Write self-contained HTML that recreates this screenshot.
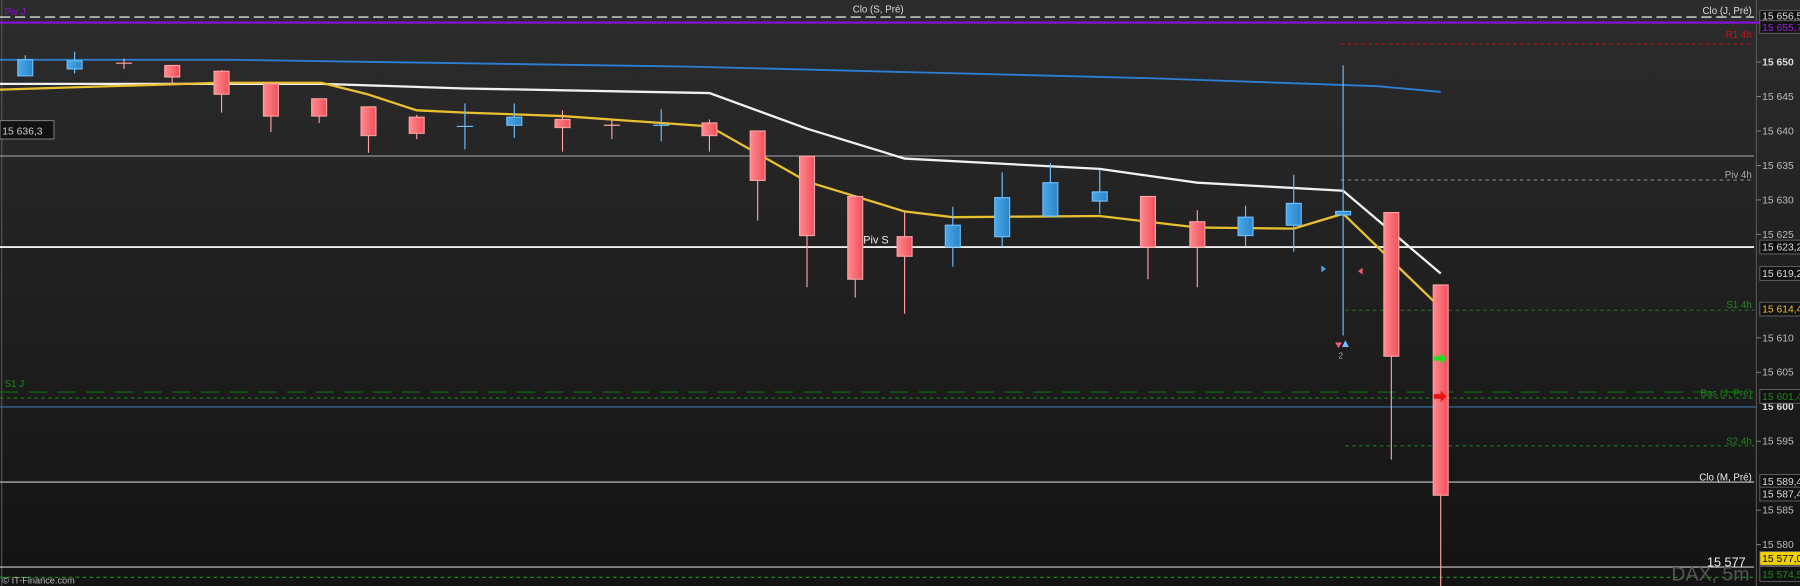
<!DOCTYPE html>
<html><head><meta charset="utf-8"><style>
html,body{margin:0;padding:0;background:#1c1c1c;overflow:hidden}
svg{display:block}
text{font-family:"Liberation Sans",sans-serif}
</style></head><body>
<svg width="1800" height="586" viewBox="0 0 1568 510" preserveAspectRatio="none" xmlns="http://www.w3.org/2000/svg">
<defs>
<linearGradient id="bg" x1="0" y1="0" x2="0" y2="1">
<stop offset="0" stop-color="#2c2c2c"/><stop offset="1" stop-color="#131313"/></linearGradient>
<linearGradient id="rd" x1="0" y1="0" x2="1" y2="0"><stop offset="0" stop-color="#ff8a8e"/><stop offset="1" stop-color="#f0505a"/></linearGradient>
<linearGradient id="bl" x1="0" y1="0" x2="1" y2="0"><stop offset="0" stop-color="#4aa8e8"/><stop offset="1" stop-color="#2c84c8"/></linearGradient>
</defs>
<rect width="1568" height="510" fill="url(#bg)"/>
<line x1="1.5" y1="0" x2="1.5" y2="510" stroke="#555" stroke-width="1"/>
<line x1="1530" y1="0" x2="1530" y2="510" stroke="#555" stroke-width="1"/>
<line x1="0" y1="14.8" x2="1528" y2="14.8" stroke="#ddd" stroke-width="1.2" stroke-dasharray="9,4"/>
<line x1="0" y1="19.7" x2="1568" y2="19.7" stroke="#8a10d0" stroke-width="2"/>
<line x1="1168" y1="38.3" x2="1528" y2="38.3" stroke="#d01010" stroke-width="0.9" stroke-dasharray="3,3"/>
<line x1="0" y1="135.8" x2="1528" y2="135.8" stroke="#aaa" stroke-width="0.9"/>
<line x1="1168" y1="156.7" x2="1528" y2="156.7" stroke="#888" stroke-width="0.9" stroke-dasharray="3,3"/>
<line x1="0" y1="215" x2="1528" y2="215" stroke="#eee" stroke-width="1.6"/>
<line x1="1172" y1="270" x2="1528" y2="270" stroke="#1d7a1d" stroke-width="0.9" stroke-dasharray="3,3"/>
<line x1="0" y1="341.2" x2="1528" y2="341.2" stroke="#127012" stroke-width="0.9" stroke-dasharray="16,9"/>
<line x1="0" y1="346.4" x2="1528" y2="346.4" stroke="#1d8a1d" stroke-width="0.9" stroke-dasharray="3,3"/>
<line x1="0" y1="354.2" x2="1530" y2="354.2" stroke="#3a74a8" stroke-width="1"/>
<line x1="1172" y1="388" x2="1528" y2="388" stroke="#1d7a1d" stroke-width="0.9" stroke-dasharray="3,3"/>
<line x1="0" y1="419.5" x2="1528" y2="419.5" stroke="#aaa" stroke-width="1.2"/>
<line x1="0" y1="493.5" x2="1528" y2="493.5" stroke="#ccc" stroke-width="1"/>
<line x1="0" y1="502.5" x2="1528" y2="502.5" stroke="#1d8a1d" stroke-width="1" stroke-dasharray="3,3"/>
<g font-size="8.5" text-anchor="end">
<text x="765" y="11" fill="#ddd" text-anchor="middle">Clo (S, Pré)</text>
<text x="1526" y="12" fill="#ddd">Clo (J, Pré)</text>
<text x="1526" y="33" fill="#d01010">R1 4h</text>
<text x="1526" y="155" fill="#aaa">Piv 4h</text>
<text x="1526" y="268" fill="#1d8a1d">S1 4h</text>
<text x="1526" y="345" fill="#1d8a1d">Bas (J, Pré)</text>
<text x="1526" y="387" fill="#1d8a1d">S2 4h</text>
<text x="1526" y="418" fill="#eee">Clo (M, Pré)</text>
<text x="4" y="13" fill="#8a10d0" text-anchor="start">Piv J</text>
<text x="4" y="337" fill="#1d8a1d" text-anchor="start">S1 J</text>
<text x="752" y="212" fill="#eee" text-anchor="start" font-size="9.5">Piv S</text>
</g>
<polyline fill="none" stroke="#2d7fd6" stroke-width="1.6" points="0,52 200,52 400,55 600,58 800,63 1000,68 1200,75 1255,80"/>
<polyline fill="none" stroke="#f0f0f0" stroke-width="2" points="0,73 280,73 405,77 618,81 703,112 788,138 958,147 1043,159 1170,166 1255,238"/>
<polyline fill="none" stroke="#e8c030" stroke-width="2" points="0,78 193,72 280,72 320,82 363,96 405,98 490,101 618,110 703,158 788,184 830,189 958,188 1043,198 1127,199 1170,186 1255,268"/>
<g stroke-width="1">
<g stroke="#6ec0ff" fill="url(#bl)">
<line x1="22" y1="48" x2="22" y2="66"/><rect x="15.5" y="52" width="13" height="14"/>
<line x1="65" y1="45" x2="65" y2="64"/><rect x="58.5" y="53" width="13" height="7"/>
<line x1="405" y1="90" x2="405" y2="130"/><line x1="398" y1="110" x2="412" y2="110"/>
<line x1="448" y1="90" x2="448" y2="120"/><rect x="441.5" y="102" width="13" height="7"/>
<line x1="576" y1="95" x2="576" y2="123"/><line x1="569" y1="109" x2="583" y2="109"/>
<line x1="830" y1="180" x2="830" y2="232"/><rect x="823.5" y="196" width="13" height="19"/>
<line x1="873" y1="150" x2="873" y2="215"/><rect x="866.5" y="172" width="13" height="34"/>
<line x1="915" y1="142" x2="915" y2="188"/><rect x="908.5" y="159" width="13" height="29"/>
<line x1="958" y1="148" x2="958" y2="186"/><rect x="951.5" y="167" width="13" height="8"/>
<line x1="1085" y1="179" x2="1085" y2="214"/><rect x="1078.5" y="189" width="13" height="16"/>
<line x1="1127" y1="152" x2="1127" y2="219"/><rect x="1120.5" y="177" width="13" height="19"/>
<line x1="1170" y1="57" x2="1170" y2="292"/><rect x="1163.5" y="184" width="13" height="3"/>
</g>
<g stroke="#ffa0a4" fill="url(#rd)">
<line x1="108" y1="51" x2="108" y2="60"/><line x1="101" y1="55" x2="115" y2="55"/>
<line x1="150" y1="57" x2="150" y2="73"/><rect x="143.5" y="57" width="13" height="10"/>
<line x1="193" y1="61" x2="193" y2="98"/><rect x="186.5" y="62" width="13" height="20"/>
<line x1="236" y1="73" x2="236" y2="115"/><rect x="229.5" y="73" width="13" height="28"/>
<line x1="278" y1="86" x2="278" y2="107"/><rect x="271.5" y="86" width="13" height="15"/>
<line x1="321" y1="93" x2="321" y2="133"/><rect x="314.5" y="93" width="13" height="25"/>
<line x1="363" y1="100" x2="363" y2="121"/><rect x="356.5" y="102" width="13" height="14"/>
<line x1="490" y1="96" x2="490" y2="132"/><rect x="483.5" y="104" width="13" height="7"/>
<line x1="533" y1="104" x2="533" y2="121"/><line x1="526" y1="109" x2="540" y2="109"/>
<line x1="618" y1="104" x2="618" y2="132"/><rect x="611.5" y="107" width="13" height="11"/>
<line x1="660" y1="114" x2="660" y2="192"/><rect x="653.5" y="114" width="13" height="43"/>
<line x1="703" y1="136" x2="703" y2="250"/><rect x="696.5" y="136" width="13" height="69"/>
<line x1="745" y1="171" x2="745" y2="259"/><rect x="738.5" y="171" width="13" height="72"/>
<line x1="788" y1="184" x2="788" y2="273"/><rect x="781.5" y="206" width="13" height="17"/>
<line x1="1000" y1="171" x2="1000" y2="243"/><rect x="993.5" y="171" width="13" height="44"/>
<line x1="1043" y1="183" x2="1043" y2="250"/><rect x="1036.5" y="193" width="13" height="22"/>
<line x1="1212" y1="185" x2="1212" y2="400"/><rect x="1205.5" y="185" width="13" height="125"/>
<line x1="1255" y1="248" x2="1255" y2="510"/><rect x="1248.5" y="248" width="13" height="183"/>
</g>
</g>
<polygon points="1151,231 1155,234 1151,237" fill="#4aa8e8"/>
<polygon points="1187,233 1183,236 1187,239" fill="#f06070"/>
<polygon points="1163,298 1169,298 1166,303" fill="#f06070"/>
<polygon points="1169,302 1175,302 1172,296" fill="#6ec0ff"/>
<text x="1166" y="312" font-size="7" fill="#aaa">2</text>
<polygon points="1249,310 1255,310 1255,307 1260,312 1255,317 1255,314 1249,314" fill="#22dd22"/>
<polygon points="1249,343 1255,343 1255,340 1260,345 1255,350 1255,347 1249,347" fill="#ee1111"/>
<rect x="0" y="105" width="47" height="16" fill="#111" stroke="#888" stroke-width="0.8"/>
<text x="2" y="117" font-size="9" fill="#ccc">15 636,3</text>
<text x="1456" y="505" font-size="17" fill="#555">DAX, 5m</text>
<text x="1487" y="493" font-size="11" fill="#eee">15 577</text>
<text x="2" y="508" font-size="8" fill="#bbb">© IT-Finance.com</text>
<g font-size="9" fill="#bbb">
<g stroke="#888" stroke-width="0.8">
<line x1="1530" y1="54" x2="1534" y2="54"/><line x1="1530" y1="84" x2="1534" y2="84"/><line x1="1530" y1="114" x2="1534" y2="114"/><line x1="1530" y1="144" x2="1534" y2="144"/><line x1="1530" y1="174" x2="1534" y2="174"/><line x1="1530" y1="204" x2="1534" y2="204"/><line x1="1530" y1="294" x2="1534" y2="294"/><line x1="1530" y1="324" x2="1534" y2="324"/><line x1="1530" y1="384" x2="1534" y2="384"/><line x1="1530" y1="444" x2="1534" y2="444"/><line x1="1530" y1="474" x2="1534" y2="474"/>
</g>
<text x="1535" y="57" font-weight="bold" fill="#ddd">15 650</text>
<text x="1535" y="87">15 645</text><text x="1535" y="117">15 640</text><text x="1535" y="147">15 635</text><text x="1535" y="177">15 630</text><text x="1535" y="207">15 625</text>
<text x="1535" y="297">15 610</text><text x="1535" y="327">15 605</text><text x="1535" y="357" font-weight="bold" fill="#ddd">15 600</text><text x="1535" y="387">15 595</text><text x="1535" y="447">15 585</text><text x="1535" y="477">15 580</text>
<g stroke="#666" stroke-width="0.8">
<rect x="1533" y="9" width="40" height="10" fill="#111"/>
<rect x="1533" y="18" width="40" height="11" fill="#111"/>
<rect x="1533" y="209" width="40" height="12" fill="#111"/>
<rect x="1533" y="232" width="40" height="12" fill="#111"/>
<rect x="1533" y="263" width="40" height="12" fill="#111"/>
<rect x="1533" y="339" width="40" height="12" fill="#111"/>
<rect x="1533" y="413" width="40" height="12" fill="#111"/>
<rect x="1533" y="424" width="40" height="12" fill="#111"/>
<rect x="1533" y="480" width="40" height="12" fill="#f0d000"/>
<rect x="1533" y="493" width="40" height="13" fill="#111"/>
</g>
<text x="1535" y="17" fill="#ddd">15 656,5</text>
<text x="1535" y="27" fill="#9a20e0">15 655,7</text>
<text x="1535" y="218" fill="#ddd">15 623,2</text>
<text x="1535" y="241" fill="#ddd">15 619,2</text>
<text x="1535" y="272" fill="#e8c030">15 614,4</text>
<text x="1535" y="348" fill="#1d8a1d">15 601,4</text>
<text x="1535" y="422" fill="#ddd">15 589,4</text>
<text x="1535" y="433" fill="#ddd">15 587,4</text>
<text x="1535" y="489" fill="#000">15 577,0</text>
<text x="1535" y="503" fill="#1d8a1d">15 574,5</text>
</g>
</svg>
</body></html>
